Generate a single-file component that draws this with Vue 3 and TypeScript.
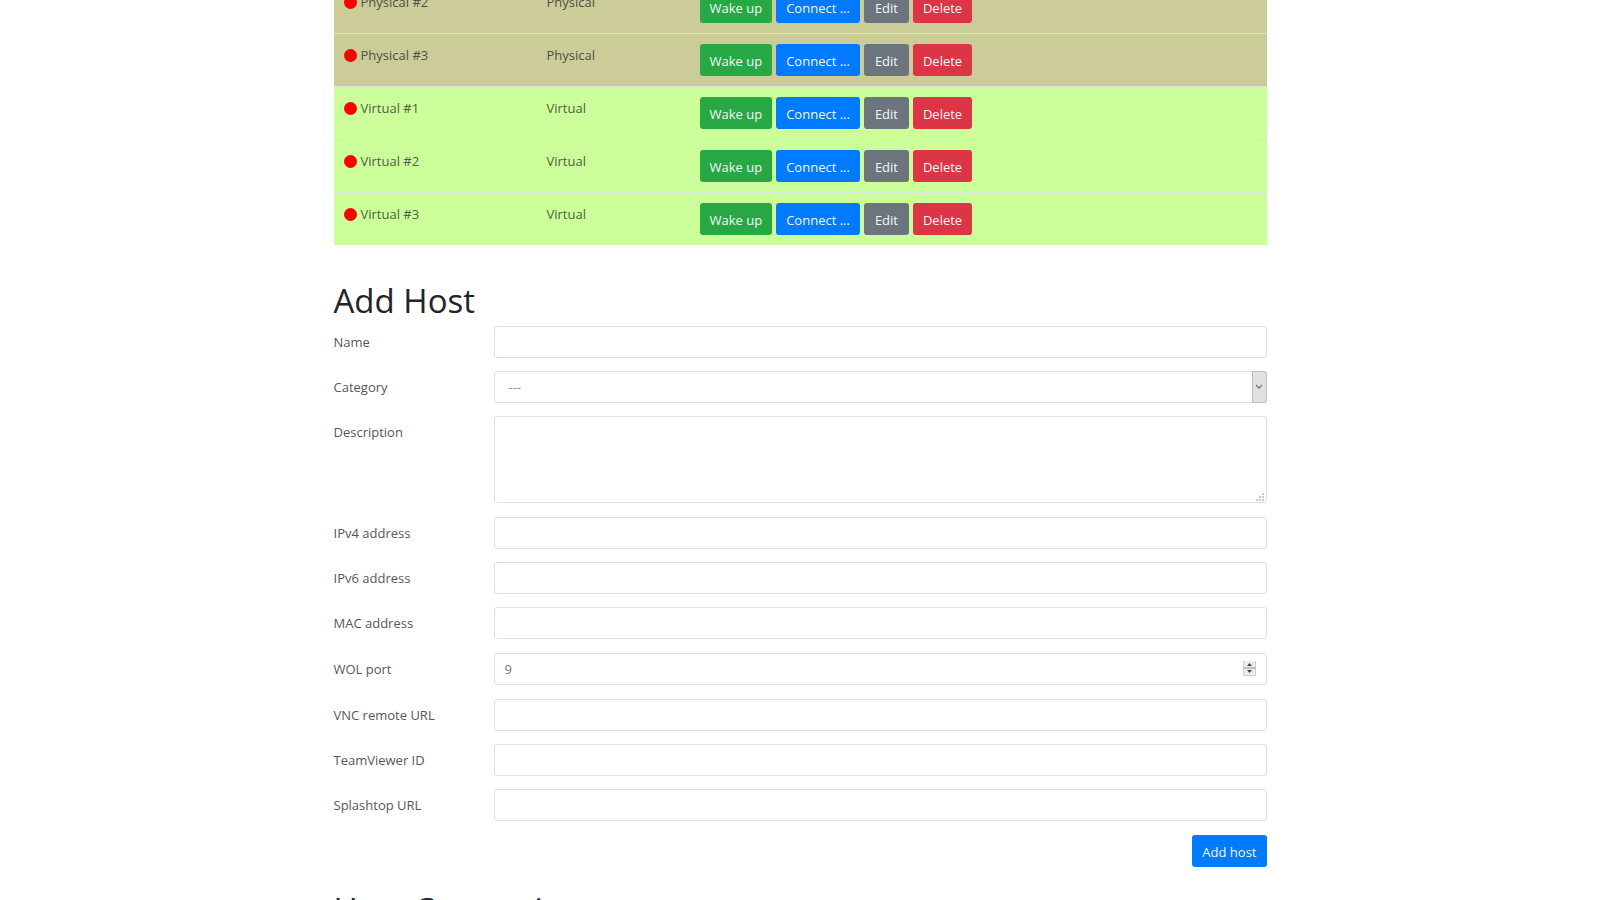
<script setup lang="ts">
import { reactive } from 'vue'

interface Host {
  name: string
  category: 'Physical' | 'Virtual'
}

interface Field {
  id: string
  label: string
  kind: 'text' | 'select' | 'textarea' | 'number'
}

const hosts: Host[] = [
  { name: 'Physical #2', category: 'Physical' },
  { name: 'Physical #3', category: 'Physical' },
  { name: 'Virtual #1', category: 'Virtual' },
  { name: 'Virtual #2', category: 'Virtual' },
  { name: 'Virtual #3', category: 'Virtual' },
]

const groups: Field[][] = [
  [
    { id: 'name', label: 'Name', kind: 'text' },
    { id: 'category', label: 'Category', kind: 'select' },
    { id: 'description', label: 'Description', kind: 'textarea' },
  ],
  [
    { id: 'ipv4', label: 'IPv4 address', kind: 'text' },
    { id: 'ipv6', label: 'IPv6 address', kind: 'text' },
    { id: 'mac', label: 'MAC address', kind: 'text' },
  ],
  [{ id: 'wol', label: 'WOL port', kind: 'number' }],
  [
    { id: 'vnc', label: 'VNC remote URL', kind: 'text' },
    { id: 'teamviewer', label: 'TeamViewer ID', kind: 'text' },
    { id: 'splashtop', label: 'Splashtop URL', kind: 'text' },
  ],
]

const form = reactive<Record<string, string | number>>({
  name: '',
  category: '',
  description: '',
  ipv4: '',
  ipv6: '',
  mac: '',
  wol: 9,
  vnc: '',
  teamviewer: '',
  splashtop: '',
})
</script>

<template>
  <main class="page">
    <div class="container">
      <table class="hosts">
        <colgroup>
          <col class="col-name" />
          <col class="col-category" />
          <col />
        </colgroup>
        <tbody>
          <tr v-for="host in hosts" :key="host.name" :class="host.category.toLowerCase()">
            <td>
              <span class="host"><span class="status"></span>{{ host.name }}</span>
            </td>
            <td>{{ host.category }}</td>
            <td class="actions-cell">
              <div class="actions">
                <button type="button" class="btn success">Wake up</button>
                <button type="button" class="btn primary">Connect ...</button>
                <button type="button" class="btn secondary">Edit</button>
                <button type="button" class="btn danger">Delete</button>
              </div>
            </td>
          </tr>
        </tbody>
      </table>

      <h2 class="title">Add Host</h2>
      <form class="form" @submit.prevent>
        <div v-for="(group, i) in groups" :key="i" class="group">
          <div v-for="field in group" :key="field.id" class="row">
            <label :for="field.id">{{ field.label }}</label>
            <div class="field">
              <template v-if="field.kind === 'select'">
                <select :id="field.id" v-model="form[field.id]" class="control">
                  <option value="">---</option>
                  <option>Physical</option>
                  <option>Virtual</option>
                </select>
                <span class="arrow" aria-hidden="true">
                  <svg width="8" height="6" viewBox="0 0 8 6">
                    <path d="M1 1l3 3 3-3" fill="none" stroke="#777" stroke-width="1.3" />
                  </svg>
                </span>
              </template>
              <template v-else-if="field.kind === 'textarea'">
                <textarea :id="field.id" v-model="form[field.id]" class="control area"></textarea>
                <svg class="grip" width="8" height="8" viewBox="0 0 8 8" aria-hidden="true">
                  <path
                    d="M6 0h2v2H6zM3 3h2v2H3zM6 3h2v2H6zM0 6h2v2H0zM3 6h2v2H3zM6 6h2v2H6z"
                    fill="#cacaca"
                  />
                </svg>
              </template>
              <template v-else-if="field.kind === 'number'">
                <input :id="field.id" v-model="form[field.id]" type="number" class="control" />
                <svg class="spinner" width="13" height="15" viewBox="0 0 13 15" aria-hidden="true">
                  <path d="M0 0h13v15H0z" fill="#d0d0d0" />
                  <path d="M1 0h11v6H1zM1 8h11v6H1z" fill="#ececec" />
                  <path d="M0 7h13" stroke="#a8a8a8" />
                  <path d="M4 5l2.500-3 2.500 3zM4 9l2.500 3 2.500-3z" fill="#444" />
                </svg>
              </template>
              <input v-else :id="field.id" v-model="form[field.id]" type="text" class="control" />
            </div>
          </div>
        </div>
        <div class="submit">
          <button type="submit" class="btn primary">Add host</button>
        </div>
      </form>

      <h2 class="title next">Host Categories</h2>
    </div>
  </main>
</template>

<style>
body {
  margin: 0;
  background: #fff;
}
</style>

<style scoped>
.page {
  height: 100vh;
  overflow: hidden;
  font-family: 'Open Sans', 'Noto Sans', sans-serif;
  font-size: 13px;
  line-height: 21px;
  color: #54585c;
}

.container {
  max-width: 933px;
  margin: 0 auto;
}

/* The list is scrolled partway through its first visible row. */
.hosts {
  width: 100%;
  margin-top: -20px;
  border-collapse: separate;
  border-spacing: 0;
  table-layout: fixed;
}

.col-name {
  width: 203px;
}

.col-category {
  width: 153px;
}

.hosts td {
  padding: 11px 10px 9px;
  border-top: 1px solid #dee2e6;
  vertical-align: top;
}

.hosts .actions-cell {
  padding: 10px;
}

.physical {
  background: #cccc99;
  color: #4d5145;
}

.virtual {
  background: #ccff99;
  color: #4d6140;
}

.host {
  display: flex;
  align-items: center;
  gap: 4px;
}

.status {
  width: 13px;
  height: 13px;
  border-radius: 50%;
  background: #f00;
}

.actions {
  display: flex;
  gap: 4px;
}

.btn {
  height: 32px;
  min-width: 45px;
  padding: 2px 10px 0;
  border: 0;
  border-radius: 3px;
  font: inherit;
  font-weight: 500;
  color: #f4f6f8;
  white-space: nowrap;
  cursor: pointer;
}

.success {
  background: #28a745;
}

.primary {
  background: #007bff;
}

.secondary {
  background: #6c757d;
}

.danger {
  background: #dc3545;
}

.title {
  margin: 35px 0 4px;
  font-size: 33px;
  line-height: 42px;
  font-weight: 400;
  color: #212529;
}

.title.next {
  margin-top: 22px;
}

.form {
  display: flex;
  flex-direction: column;
  gap: 14px;
}

.group {
  display: flex;
  flex-direction: column;
  gap: 13px;
}

.row {
  display: grid;
  grid-template-columns: 160px 1fr;
}

.row label {
  padding-top: 6px;
}

.field {
  position: relative;
  display: flex;
}

.control {
  box-sizing: border-box;
  width: 100%;
  height: 32px;
  margin: 0;
  padding: 4px 10px;
  border: 1px solid #dcdfe3;
  border-radius: 3px;
  background: #fff;
  font: inherit;
  color: #777c81;
  appearance: none;
}

select.control {
  padding-left: 14px;
  color: #8f9499;
}

input[type='number'] {
  appearance: textfield;
}

.area {
  height: 87px;
  resize: none;
}

.arrow {
  position: absolute;
  top: 0;
  right: 0;
  bottom: 0;
  box-sizing: border-box;
  width: 15px;
  display: flex;
  align-items: center;
  justify-content: center;
  border: 1px solid #bcbcbc;
  border-radius: 0 3px 3px 0;
  background: #e1e1e1;
  pointer-events: none;
}

.grip {
  position: absolute;
  right: 3px;
  bottom: 2px;
  pointer-events: none;
}

.spinner {
  position: absolute;
  top: 8px;
  right: 11px;
  pointer-events: none;
}

.submit {
  display: flex;
  justify-content: flex-end;
}
</style>
